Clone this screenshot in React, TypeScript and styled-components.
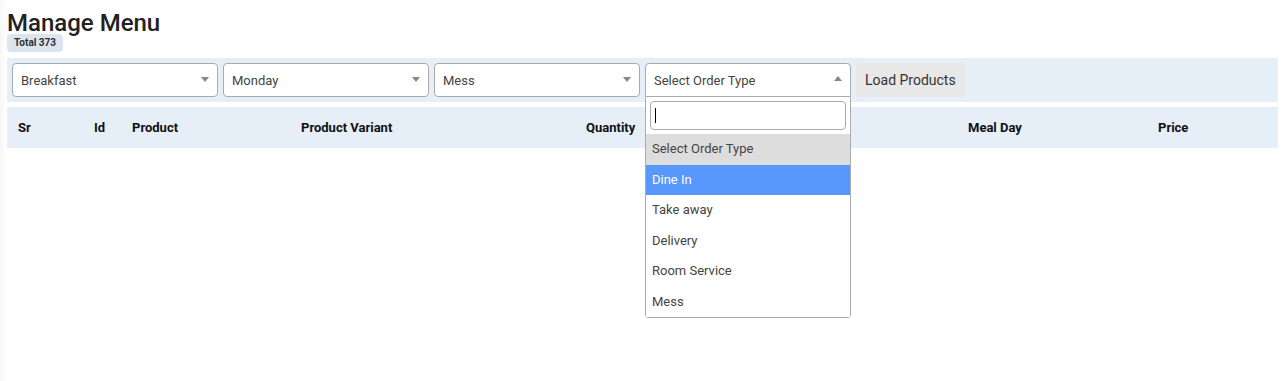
import React from "react";
import styled, { createGlobalStyle } from "styled-components";

const GlobalStyle = createGlobalStyle`
  html, body { margin: 0; padding: 0; background: #fff; }
  body {
    font-family: Roboto, "Noto Sans", Arial, sans-serif;
    color: #212529;
    box-shadow: inset 7px 0 6px -5px rgba(0,0,0,0.05);
    min-height: 381px;
  }
`;

const Page = styled.div`
  padding: 12px 10px 0 7px;
`;

const Title = styled.h1`
  margin: 0;
  font-size: 24px;
  line-height: 22px;
  font-weight: 500;
  color: #222;
`;

const Badge = styled.span`
  display: block;
  width: fit-content;
  height: 18px;
  line-height: 18px;
  padding: 0 7px;
  border-radius: 4px;
  background: #dde4ee;
  color: #2b2f36;
  font-size: 10px;
  font-weight: 700;
`;

const FilterBar = styled.div`
  margin-top: 6px;
  display: flex;
  gap: 5px;
  padding: 5px;
  background: #e6eef8;
`;

const SelectWrap = styled.div`
  position: relative;
  width: 206px;
`;

const SelectBox = styled.div<{ $open?: boolean }>`
  box-sizing: border-box;
  height: 34px;
  display: flex;
  align-items: center;
  padding: 0 20px 0 8px;
  background: #fff;
  border: 1px solid #aaa;
  border-radius: ${(p) => (p.$open ? "4px 4px 0 0" : "4px")};
  font-size: 13px;
  color: #444;
  position: relative;
`;

const Arrow = styled.span<{ $up?: boolean }>`
  position: absolute;
  right: 8px;
  top: 50%;
  margin-top: -3px;
  width: 0;
  height: 0;
  border-left: 4px solid transparent;
  border-right: 4px solid transparent;
  ${(p) =>
    p.$up
      ? "border-bottom: 5px solid #888; margin-top: -4px;"
      : "border-top: 5px solid #888;"}
`;

const Dropdown = styled.div`
  position: absolute;
  left: 0;
  right: 0;
  top: 34px;
  box-sizing: border-box;
  background: #fff;
  border: 1px solid #aaa;
  border-top: none;
  border-radius: 0 0 4px 4px;
  z-index: 10;
`;

const SearchArea = styled.div`
  padding: 4px;
`;

const SearchField = styled.div`
  box-sizing: border-box;
  height: 29px;
  border: 1px solid #aaa;
  border-radius: 4px;
  display: flex;
  align-items: center;
  padding-left: 4px;
`;

const Caret = styled.span`
  width: 1px;
  height: 15px;
  background: #000;
`;

const Option = styled.div<{ $state?: "placeholder" | "active" }>`
  padding: 6px 6px;
  line-height: 18.5px;
  font-size: 13px;
  color: ${(p) => (p.$state === "active" ? "#fff" : "#444")};
  background: ${(p) =>
    p.$state === "active" ? "#5897fb" : p.$state === "placeholder" ? "#ddd" : "#fff"};
`;

const LoadButton = styled.button`
  height: 34px;
  padding: 0 9px;
  border: none;
  border-radius: 4px;
  background: #e8e8e8;
  color: #333;
  font-family: Roboto, "Noto Sans", Arial, sans-serif;
  font-size: 14px;
  cursor: pointer;
`;

const TableHead = styled.div`
  margin-top: 5px;
  height: 41px;
  background: #e6eef8;
  display: grid;
  grid-template-columns: 76px 38px 169px 285px 174px 208px 190px 1fr;
  align-items: center;
  padding-left: 11px;
`;

const HeadCell = styled.div`
  font-size: 13px;
  font-weight: 700;
  color: #111;
  white-space: nowrap;
`;

const Select: React.FC<{ value: string }> = ({ value }) => (
  <SelectWrap>
    <SelectBox>
      {value}
      <Arrow />
    </SelectBox>
  </SelectWrap>
);

const orderTypes = ["Dine In", "Take away", "Delivery", "Room Service", "Mess"];
const headers = ["Sr", "Id", "Product", "Product Variant", "Quantity", "Meal Type", "Meal Day", "Price"];

export default function App() {
  return (
    <>
      <GlobalStyle />
      <Page>
        <Title>Manage Menu</Title>
        <Badge>Total 373</Badge>
        <FilterBar>
          <Select value="Breakfast" />
          <Select value="Monday" />
          <Select value="Mess" />
          <SelectWrap>
            <SelectBox $open>
              Select Order Type
              <Arrow $up />
            </SelectBox>
            <Dropdown>
              <SearchArea>
                <SearchField>
                  <Caret />
                </SearchField>
              </SearchArea>
              <Option $state="placeholder">Select Order Type</Option>
              {orderTypes.map((t, i) => (
                <Option key={t} $state={i === 0 ? "active" : undefined}>
                  {t}
                </Option>
              ))}
            </Dropdown>
          </SelectWrap>
          <LoadButton>Load Products</LoadButton>
        </FilterBar>
        <TableHead>
          {headers.map((h) => (
            <HeadCell key={h}>{h}</HeadCell>
          ))}
        </TableHead>
      </Page>
    </>
  );
}
